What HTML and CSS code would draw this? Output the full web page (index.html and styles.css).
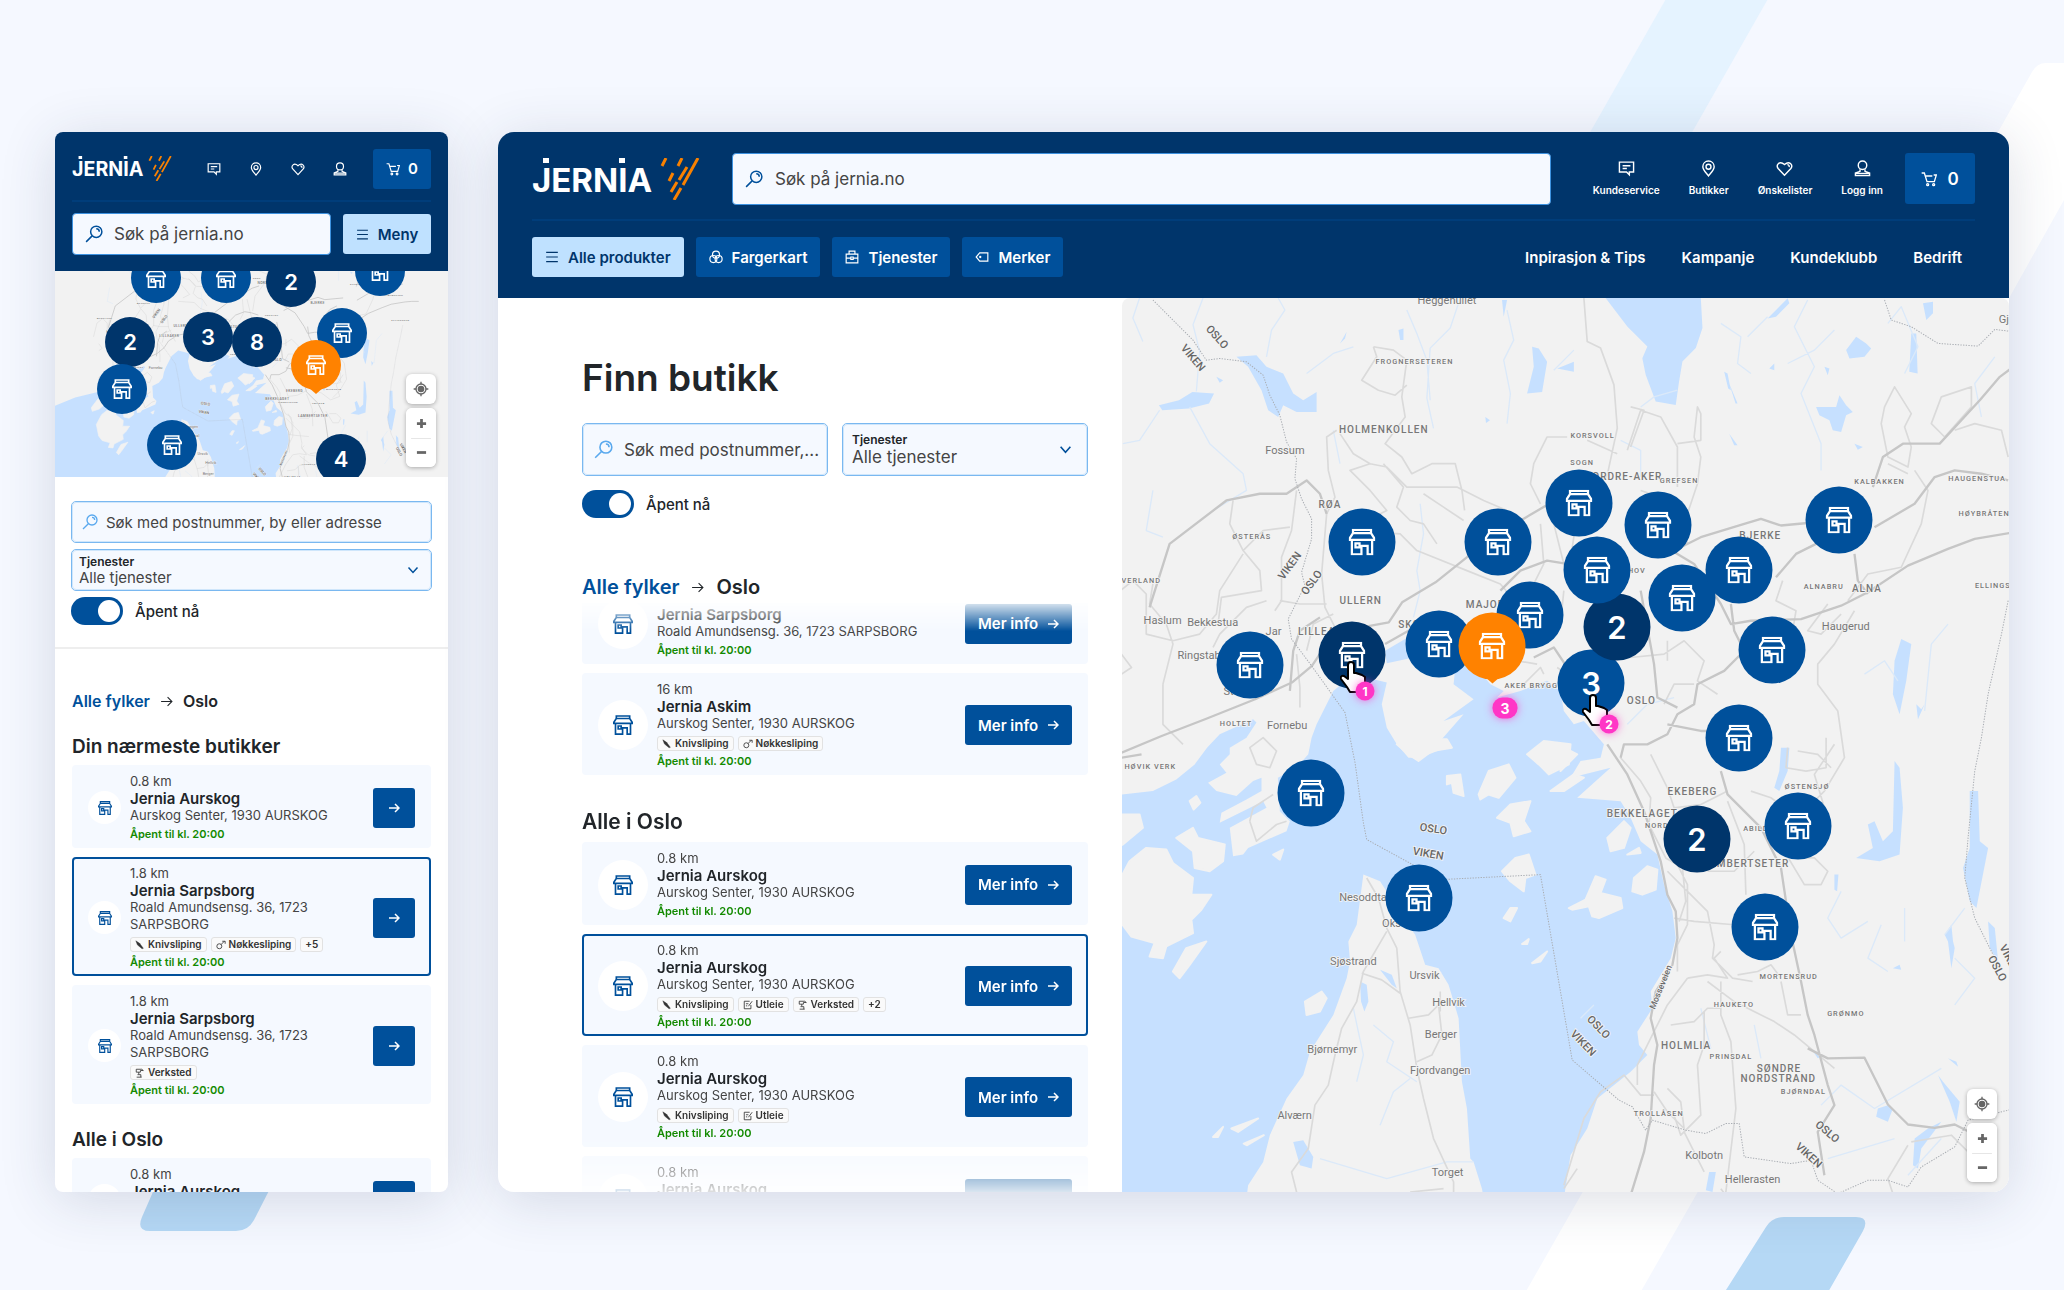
FILE: index.html
```html
<!DOCTYPE html>
<html lang="no">
<head>
<meta charset="utf-8">
<meta name="viewport" content="width=device-width, initial-scale=1">
<title>Finn butikk – Jernia</title>
<link rel="stylesheet" href="styles.css">
</head>
<body>

<svg class="sprite" aria-hidden="true">
  <symbol id="i-store" viewBox="0 0 24 24"><path d="M4 1.2h16v3l3 4.6v1.2H1V8.800l3-4.600zM4 4.200h16M3 10v13h8.500v-7.500H17V23h4V10M6.200 13.200h3.600v3.600H6.200z"/></symbol>
  <symbol id="i-chat" viewBox="0 0 24 24"><path d="M2 3h20v14h-6v4l-4-4H2zM6.500 8h11M6.500 12h6"/></symbol>
  <symbol id="i-place" viewBox="0 0 24 24"><path d="M12 1.500c4.500 0 8 3.300 8 8 0 5-5.500 9.500-8 13-2.500-3.500-8-8-8-13 0-4.700 3.500-8 8-8z"/><circle cx="12" cy="9.500" r="3.500"/></symbol>
  <symbol id="i-heart" viewBox="0 0 24 24"><path d="M12 21.500 3 12C-.5 7 5 0 12 6.500 19 0 24.500 7 21 12zM16 6.500c2 0 3 1.500 2.500 3.500"/></symbol>
  <symbol id="i-user" viewBox="0 0 24 24"><circle cx="12" cy="7.500" r="6"/><path d="M8.500 13v3L2 18.500V22h20v-3.500L15.500 16v-3M2 19h20"/></symbol>
  <symbol id="i-cart" viewBox="0 0 24 24"><path d="M1 3h4l4 13h11l3-10h-4M6.500 7.500H17"/><circle cx="10" cy="20.500" r="1.500"/><circle cx="19" cy="20.500" r="1.500"/></symbol>
  <symbol id="i-search" viewBox="0 0 24 24"><circle cx="15" cy="9" r="7.500"/><path d="m9.500 14.500-8 8M15 5c2.500 0 4 1.500 4 4"/></symbol>
  <symbol id="i-menu" viewBox="0 0 24 24"><path d="M2 4h20M2 12h20M2 20h20"/></symbol>
  <symbol id="i-arrow" viewBox="0 0 24 24"><path d="M2 12h20M14 4l8 8-8 8"/></symbol>
  <symbol id="i-chevron" viewBox="0 0 24 24"><path d="m3 7 9 10 9-10"/></symbol>
  <symbol id="i-plus" viewBox="0 0 24 24"><path d="M12 2v20M2 12h20"/></symbol>
  <symbol id="i-minus" viewBox="0 0 24 24"><path d="M2 12h20"/></symbol>
  <symbol id="i-colors" viewBox="0 0 24 24"><circle cx="12" cy="8" r="6"/><circle cx="7.500" cy="15.500" r="6"/><circle cx="16.500" cy="15.500" r="6"/></symbol>
  <symbol id="i-case" viewBox="0 0 24 24"><path d="M2 7h20v15H2zM7 7V2h10v5M2 14h7M15 14h7M10 12h4v4h-4z"/></symbol>
  <symbol id="i-tag" viewBox="0 0 24 24"><path d="M8 5h14v14H8l-6-7z"/><circle cx="9" cy="12" r="1"/></symbol>
  <symbol id="i-knife" viewBox="0 0 24 24"><path fill="currentColor" stroke-width="1" d="m2 2 9 6 9 12-3 1L6 12z"/></symbol>
  <symbol id="i-key" viewBox="0 0 24 24"><circle cx="8" cy="15" r="6"/><path d="M12 11l8-8M15 3h7v6"/></symbol>
  <symbol id="i-edit" viewBox="0 0 24 24"><path d="M16 3H3v18h16V12M22 3l-9 12M7 9h6M7 14h3"/></symbol>
  <symbol id="i-work" viewBox="0 0 24 24"><path d="M3 3h13l4 3h-7v4H3zM9 10v5M4 22h12M6 16h8v6"/></symbol>
  <symbol id="i-hand" viewBox="0 0 27 32"><path fill="#fff" stroke="#000" stroke-width="2" stroke-linejoin="round" d="M11 1c2 0 3 1 3 3v8l2 0 3 1 3 1 3 2v7l-3 5v3H10l-3-5-6-8c-1-2 1-4 3-3l4 3V4c0-2 1-3 3-3z"/></symbol>
  <symbol id="i-locate" viewBox="0 0 24 24"><circle cx="12" cy="12" r="7.500"/><circle cx="12" cy="12" r="4" fill="currentColor"/><path d="M12 1v4M12 19v4M1 12h4M19 12h4"/></symbol>
  <symbol id="i-logo" viewBox="0 0 168 42">
    <text x="0" y="34" class="logo-word">JERNIA</text>
    <path fill="#fff" stroke="none" d="M11 0h6v5h-6zM87 0h6v5h-6z"/>
    <path fill="none" stroke="#f98100" stroke-width="3" d="M134 0l-4 8M150 0l-4 8M166 0l-15 27M155 9l-8 13M141 15l-4 8M145 24l-6 10M149 30l-7 12"/>
  </symbol>
</svg>

<div class="backdrop" aria-hidden="true">
  <svg width="2064" height="1290" viewBox="0 0 2064 1290">
    <path fill="#e5f3ff" d="M1671-10h102l-91 160h-102z"/>
    <path fill="#fff" d="M2064 63h-18q-9 0-14 9l-112 198v80h60l84-150z"/>
    <path fill="#b5d8f5" d="M180 1130h120l-46 90q-6 11-18 11H150q-14 0-8-14z"/>
    <path fill="#fff" d="M1601 1160h115l-80 140h-115z"/>
    <path fill="#b5d8f5" d="M1784 1217h72q14 0 7 14l-40 70h-104l47-74q6-10 18-10z"/>
  </svg>
</div>

<main class="scene">

<!-- Phone layout -->
<section class="device phone" aria-label="Mobil">
  <header class="site-header">
    <div class="top">
      <svg class="logo"><use href="#i-logo"/></svg>
      <nav class="quick" aria-label="Snarveier">
        <a href="#" aria-label="Kundeservice"><svg class="icon"><use href="#i-chat"/></svg></a>
        <a href="#" aria-label="Butikker"><svg class="icon"><use href="#i-place"/></svg></a>
        <a href="#" aria-label="Ønskelister"><svg class="icon"><use href="#i-heart"/></svg></a>
        <a href="#" aria-label="Logg inn"><svg class="icon"><use href="#i-user"/></svg></a>
      </nav>
      <button class="cart" type="button"><svg class="icon"><use href="#i-cart"/></svg>0</button>
    </div>
    <div class="bottom">
      <label class="search"><svg class="icon"><use href="#i-search"/></svg><input type="text" aria-label="Søk" placeholder="Søk på jernia.no"></label>
      <button class="nav-btn light" type="button"><svg class="icon"><use href="#i-menu"/></svg>Meny</button>
    </div>
  </header>

  <div class="map">
    <svg class="geo" viewBox="45 453 1179 617" preserveAspectRatio="xMidYMin slice"><g transform="translate(175 297) scale(.343)"><use href="#geo"/></g></svg>
    <button class="pin" type="button" aria-label="Butikk" style="left:101px;top:7px"><svg class="icon"><use href="#i-store"/></svg></button>
    <button class="pin" type="button" aria-label="Butikk" style="left:171px;top:7px"><svg class="icon"><use href="#i-store"/></svg></button>
    <button class="pin dark" type="button" style="left:236px;top:11px">2</button>
    <button class="pin" type="button" aria-label="Butikk" style="left:325px;top:0px"><svg class="icon"><use href="#i-store"/></svg></button>
    <button class="pin dark" type="button" style="left:75px;top:71px">2</button>
    <button class="pin dark" type="button" style="left:153px;top:66px">3</button>
    <button class="pin dark" type="button" style="left:202px;top:71px">8</button>
    <button class="pin" type="button" aria-label="Butikk" style="left:287px;top:62px"><svg class="icon"><use href="#i-store"/></svg></button>
    <button class="pin active" type="button" aria-label="Valgt butikk" style="left:261px;top:94px"><svg class="icon"><use href="#i-store"/></svg></button>
    <button class="pin" type="button" aria-label="Butikk" style="left:67px;top:118px"><svg class="icon"><use href="#i-store"/></svg></button>
    <button class="pin" type="button" aria-label="Butikk" style="left:117px;top:174px"><svg class="icon"><use href="#i-store"/></svg></button>
    <button class="pin dark" type="button" style="left:286px;top:188px">4</button>
    <div class="controls">
      <button type="button" aria-label="Min posisjon"><svg class="icon"><use href="#i-locate"/></svg></button>
      <div class="zoom"><button type="button" aria-label="Zoom inn"><svg class="icon"><use href="#i-plus"/></svg></button><button type="button" aria-label="Zoom ut"><svg class="icon"><use href="#i-minus"/></svg></button></div>
    </div>
  </div>

  <form class="filters">
    <label class="field"><svg class="icon"><use href="#i-search"/></svg><input type="text" aria-label="Søk etter butikk" placeholder="Søk med postnummer, by eller adresse"></label>
    <div class="field choice">
      <div><label for="svc-m">Tjenester</label><select id="svc-m"><option>Alle tjenester</option></select></div>
      <svg class="icon"><use href="#i-chevron"/></svg>
    </div>
    <label class="toggle"><input type="checkbox" checked>Åpent nå</label>
  </form>

  <div class="results">
    <nav class="crumbs" aria-label="Fylke"><a href="#">Alle fylker</a><svg class="icon"><use href="#i-arrow"/></svg><span>Oslo</span></nav>
    <h2>Din nærmeste butikker</h2>
    <ul class="stores">
      <li class="store"><span class="badge"><svg class="icon"><use href="#i-store"/></svg></span>
        <div class="info"><p>0.8 km</p><h3>Jernia Aurskog</h3><p>Aurskog Senter, 1930 AURSKOG</p><p class="open">Åpent til kl. 20:00</p></div>
        <button class="more" type="button" aria-label="Mer info"><svg class="icon"><use href="#i-arrow"/></svg></button></li>
      <li class="store selected"><span class="badge"><svg class="icon"><use href="#i-store"/></svg></span>
        <div class="info"><p>1.8 km</p><h3>Jernia Sarpsborg</h3><p>Roald Amundsensg. 36, 1723 SARPSBORG</p>
          <div class="tags"><span><svg class="icon"><use href="#i-knife"/></svg>Knivsliping</span><span><svg class="icon"><use href="#i-key"/></svg>Nøkkesliping</span><span>+5</span></div>
          <p class="open">Åpent til kl. 20:00</p></div>
        <button class="more" type="button" aria-label="Mer info"><svg class="icon"><use href="#i-arrow"/></svg></button></li>
      <li class="store"><span class="badge"><svg class="icon"><use href="#i-store"/></svg></span>
        <div class="info"><p>1.8 km</p><h3>Jernia Sarpsborg</h3><p>Roald Amundsensg. 36, 1723 SARPSBORG</p>
          <div class="tags"><span><svg class="icon"><use href="#i-work"/></svg>Verksted</span></div>
          <p class="open">Åpent til kl. 20:00</p></div>
        <button class="more" type="button" aria-label="Mer info"><svg class="icon"><use href="#i-arrow"/></svg></button></li>
    </ul>
    <h2>Alle i Oslo</h2>
    <ul class="stores">
      <li class="store"><span class="badge"><svg class="icon"><use href="#i-store"/></svg></span>
        <div class="info"><p>0.8 km</p><h3>Jernia Aurskog</h3><p>Aurskog Senter, 1930 AURSKOG</p><p class="open">Åpent til kl. 20:00</p></div>
        <button class="more" type="button" aria-label="Mer info"><svg class="icon"><use href="#i-arrow"/></svg></button></li>
    </ul>
  </div>
</section>

<!-- Desktop layout -->
<section class="device desktop" aria-label="Desktop">
  <header class="site-header">
    <div class="top">
      <svg class="logo"><use href="#i-logo"/></svg>
      <label class="search"><svg class="icon"><use href="#i-search"/></svg><input type="text" aria-label="Søk" placeholder="Søk på jernia.no"></label>
      <nav class="quick" aria-label="Snarveier">
        <a href="#"><svg class="icon"><use href="#i-chat"/></svg>Kundeservice</a>
        <a href="#"><svg class="icon"><use href="#i-place"/></svg>Butikker</a>
        <a href="#"><svg class="icon"><use href="#i-heart"/></svg>Ønskelister</a>
        <a href="#"><svg class="icon"><use href="#i-user"/></svg>Logg inn</a>
      </nav>
      <button class="cart" type="button"><svg class="icon"><use href="#i-cart"/></svg>0</button>
    </div>
    <div class="bottom">
      <button class="nav-btn light" type="button"><svg class="icon"><use href="#i-menu"/></svg>Alle produkter</button>
      <button class="nav-btn" type="button"><svg class="icon"><use href="#i-colors"/></svg>Fargerkart</button>
      <button class="nav-btn" type="button"><svg class="icon"><use href="#i-case"/></svg>Tjenester</button>
      <button class="nav-btn" type="button"><svg class="icon"><use href="#i-tag"/></svg>Merker</button>
      <nav class="links" aria-label="Sider"><a href="#">Inpirasjon &amp; Tips</a><a href="#">Kampanje</a><a href="#">Kundeklubb</a><a href="#">Bedrift</a></nav>
    </div>
  </header>

  <div class="body">
    <div class="panel">
      <h1>Finn butikk</h1>
      <form class="filters">
        <label class="field"><svg class="icon"><use href="#i-search"/></svg><input type="text" aria-label="Søk etter butikk" placeholder="Søk med postnummer,..."></label>
        <div class="field choice">
          <div><label for="svc-d">Tjenester</label><select id="svc-d"><option>Alle tjenester</option></select></div>
          <svg class="icon"><use href="#i-chevron"/></svg>
        </div>
        <label class="toggle"><input type="checkbox" checked>Åpent nå</label>
      </form>
      <nav class="crumbs" aria-label="Fylke"><a href="#">Alle fylker</a><svg class="icon"><use href="#i-arrow"/></svg><span>Oslo</span></nav>
      <div class="results">
        <ul class="stores">
          <li class="store"><span class="badge"><svg class="icon"><use href="#i-store"/></svg></span>
            <div class="info"><p>1.8 km</p><h3>Jernia Sarpsborg</h3><p>Roald Amundsensg. 36, 1723 SARPSBORG</p><p class="open">Åpent til kl. 20:00</p></div>
            <button class="more" type="button">Mer info<svg class="icon"><use href="#i-arrow"/></svg></button></li>
          <li class="store"><span class="badge"><svg class="icon"><use href="#i-store"/></svg></span>
            <div class="info"><p>16 km</p><h3>Jernia Askim</h3><p>Aurskog Senter, 1930 AURSKOG</p>
              <div class="tags"><span><svg class="icon"><use href="#i-knife"/></svg>Knivsliping</span><span><svg class="icon"><use href="#i-key"/></svg>Nøkkesliping</span></div>
              <p class="open">Åpent til kl. 20:00</p></div>
            <button class="more" type="button">Mer info<svg class="icon"><use href="#i-arrow"/></svg></button></li>
        </ul>
        <h2>Alle i Oslo</h2>
        <ul class="stores">
          <li class="store"><span class="badge"><svg class="icon"><use href="#i-store"/></svg></span>
            <div class="info"><p>0.8 km</p><h3>Jernia Aurskog</h3><p>Aurskog Senter, 1930 AURSKOG</p><p class="open">Åpent til kl. 20:00</p></div>
            <button class="more" type="button">Mer info<svg class="icon"><use href="#i-arrow"/></svg></button></li>
          <li class="store selected"><span class="badge"><svg class="icon"><use href="#i-store"/></svg></span>
            <div class="info"><p>0.8 km</p><h3>Jernia Aurskog</h3><p>Aurskog Senter, 1930 AURSKOG</p>
              <div class="tags"><span><svg class="icon"><use href="#i-knife"/></svg>Knivsliping</span><span><svg class="icon"><use href="#i-edit"/></svg>Utleie</span><span><svg class="icon"><use href="#i-work"/></svg>Verksted</span><span>+2</span></div>
              <p class="open">Åpent til kl. 20:00</p></div>
            <button class="more" type="button">Mer info<svg class="icon"><use href="#i-arrow"/></svg></button></li>
          <li class="store"><span class="badge"><svg class="icon"><use href="#i-store"/></svg></span>
            <div class="info"><p>0.8 km</p><h3>Jernia Aurskog</h3><p>Aurskog Senter, 1930 AURSKOG</p>
              <div class="tags"><span><svg class="icon"><use href="#i-knife"/></svg>Knivsliping</span><span><svg class="icon"><use href="#i-edit"/></svg>Utleie</span></div>
              <p class="open">Åpent til kl. 20:00</p></div>
            <button class="more" type="button">Mer info<svg class="icon"><use href="#i-arrow"/></svg></button></li>
          <li class="store"><span class="badge"><svg class="icon"><use href="#i-store"/></svg></span>
            <div class="info"><p>0.8 km</p><h3>Jernia Aurskog</h3><p>Aurskog Senter, 1930 AURSKOG</p><p class="open">Åpent til kl. 20:00</p></div>
            <button class="more" type="button">Mer info<svg class="icon"><use href="#i-arrow"/></svg></button></li>
        </ul>
      </div>
    </div>

    <div class="map">
      <svg class="geo" viewBox="6 24 2658 2676" preserveAspectRatio="xMidYMin slice">
        <g id="geo">
          <!-- fjord -->
          <path class="water" d="M-400 1640 L-200 1560 L6 1510 100 1500 170 1465 225 1420 262 1370 300 1330 400 1285 410 1295 380 1340 330 1370 330 1390 300 1420 320 1445 265 1475 290 1500 350 1515 400 1470 425 1460 425 1500 380 1525 305 1565 300 1595 430 1530 440 1550 330 1610 340 1695 370 1690 385 1670 500 1620 510 1590 480 1560 474 1460 530 1430 565 1390 575 1340 590 1300 620 1240 640 1200 700 1150 800 1175 785 1240 800 1310 830 1360 865 1400 900 1400 990 1365 960 1350 1030 1270 970 1290 1060 1225 1000 1180 1005 1130 1060 1120 1110 1180 1150 1200 1130 1220 1200 1200 1280 1170 1320 1200 1330 1260 1360 1300 1390 1290 1450 1360 1440 1400 1380 1410 1350 1460 1470 1430 1370 1520 1500 1530 1530 1580 1560 1650 1610 1690 1630 1780 1655 1860 1665 1940 1650 2000 1590 2100 1595 2150 1550 2220 1555 2260 1580 2290 1530 2340 1430 2420 1400 2510 1350 2590 1330 2720 1090 2720 1085 2690 1060 2610 1050 2600 1040 2450 1025 2370 1015 2180 985 2080 955 2030 915 2020 885 1930 850 1880 780 1770 730 1750 710 1900 685 1950 690 2010 680 2060 640 2170 570 2280 550 2350 500 2420 450 2530 430 2610 385 2680 380 2720 -400 2720z"/>
          <path class="water" d="M795 1080l65-38 10 60-70 15z"/>
          <!-- islands -->
          <path class="land" d="M30 1710l50-40 60 5 20 40 60 45-5 50 60 0-30 45-30 30 5 40-80 40-10 35-40-5 15-40-70-20-30-40-20-100z"/>
          <path class="land" d="M170 1640l50-30 15 30 80 20-5 50-40 30-45-10-5-50zM-60 1650l60-80 60 0 10 40-60 50-60 20zM210 1530l20-15 12 20-20 20zM160 2040l40-70 60-20-50 70-30 40zM555 2130l50-30 15 20-20 40-40 10zM280 2535l30-30-15 30zM335 2510l80-30-60 40zM372 2555l60-25-50 30zM460 1690l30-15-10 30z"/>
          <path class="land" d="M830 1360l60-15 90 0 15 25-60 10-40 30-30-20zM980 1455l40-5 10 65-30-10-5-30-15 5zM1075 1510l30-70 60-20 20 40-50 60-30-10-25 15zM1220 1390l50-40 80 10-5 60-60 30-30-30zM1290 1500l70-50 30 10-60 40zM1130 1580l40-40 60-10-20 60 20 30-50 15-10-40zM1145 1740l40-40 40-10 20 60-30 10-5 40-40-30zM1150 1880l20-30 20 0-20 40zM1205 1958l20-15-5 15zM1235 2015l45-35-20 30z"/>
          <path class="land" d="M1320 1410l30-30 20 10-50 50zM1460 1640l50-50 20 20-20 60-40 10zM1540 1760l40-35 30 10-5 60-40 15-30-10zM1345 1850l50-25 30-70 30 10-15 40 60 15 5 30-70 30-20-5-10-30-50 10zM1520 1690l35-20 5 15z"/>
          <!-- lakes -->
          <path class="water" d="M350 200l60-5 30 35 50 20 30 60 30 20 40-25v60l-60 0-40-20-15 35-30-20-20-60-40-70zM118 345l60-15 40-25 65 5-15 30-60 15-80 5zM1235 170l20 5 25 40-15 90-45 5 20-80zM1310 235l50-20 0 30zM660 160l20-35-5 20zM835 120l15-5 0 35-10 0zM290 260l20 10-10 8zM1145 30l15 0-10 50zM520 2550l30-5 30 50-5 35-35-10zM720 2070l20 10 5 50-12 30-10-30zM780 2035l35 15 15 40-15-10zM1095 380l14 10-12 8z"/>
          <path class="water" d="M1455 24h285l5 90-20 60-40 40-10 60-10 70-60-10-30-80-10-50 15-35-60-60zM2175 180l30-40 30 20 15 15-20 25-45 5zM2370 130l15 0 4 120-25-5zM2085 350l60 0 10-35 20 30 20 20-20 10-15 50-25-5-10-30-30-15zM1940 85l60-60 5 15-40 40zM1820 250l10 50-8-5-12-50zM1825 280l25 60-6 0zM2405 40l30-5 0 35-20 20zM1825 430l25 35-10 0zM2200 460l25 10-15 8zM1945 235l15-15 0 20zM2110 230l15 5-5 20zM2340 1045l30 15-15 110-20 100-20-60 5-100zM2385 1240l15 15 10-15-20 45z"/>
          <path class="water" d="M1980 1370l25 0-5 70-25 60-15-10 15-50zM2320 1410l15 20 10 120-10 140-60 20-70-10 50-30-15-70 20-10 25 60 30-30zM2545 1500l25 0 5 150 25 20-35 180-20-20-20-100 20-60zM2600 1890l20 20 10 100-25-40zM2470 1930l20-30 5 50 5 20-10 60-10-80zM2270 2450l30-10 15 10-15 40-35-15zM2450 2350l15 20 50 60-10 60-20-60zM2380 2540l40-30 40-20-60 80-10 60-15-10zM2140 1750l12 0-4 50-8-5zM2315 2030l20-10 5 15zM1765 2640l20 0-10 60-20-5zM2070 2270l30 25-10 5zM2480 2300l25 10 5 15z"/>
          <!-- streams -->
          <path class="stream" d="M60 24l-20 60 30 70M250 24l-30 80 20 80-10 120M440 200l15-80 40-60-20-36M100 600l-20 120 50 20M120 360l-60 90-50 10M210 350l60 110 100 90 10 50-100 60M560 250l80-60 60-20M860 60l30 70 30 80 10 120M1020 24l-30 90-60 60-10 150 20 90M1160 60l20 90-30 60 20 100-10 90M640 420l20 100M760 2200l60 50-20 60 90 60M600 2600l200 60 180-50 80 0M780 2500l40-100 50-40M700 2150l30 140-20 80M1300 240l60-60M900 640l10 90-20 110 10 60-20 80M1500 450l60 30 0 80M1560 350l40-30 70-20M1420 2140l-40 40M1800 100l60 40-10 80 40 30M1880 140l60-60M2000 220l80-40 60-60M2060 30l-40 80 60 120-40 80 60 150 0 80M2300 100l40-50 50 120-40 80M2230 1150l60-40 40 60M2480 1000l-50 60-20 200M2280 1900l-40 100 60 40M2500 2000l60 60-60 80M2470 1930l60-80M2350 1850l0 100M2160 1800l-40 80 40 60 80-50M1740 2150l30 120M1900 2200l20 100M1520 1300l60-60 80-20M2100 2440l60-60 100 70 200-120M2120 2600l200-60M2360 2650l100-110M2620 200l-60 80 20 100"/>
          <!-- minor roads -->
          <path class="road" d="M760 170l60 10 40 30-15 110 10 60-60 80 50 40 30 50 60-30 70 0 20 80 8 60M760 170l10 30-45 70 50 30 50 15 35-30M650 420l-30 20 5 100 20 80-25 50-15 180 10 100 60 120M660 430l40 60 50 30 50 10 60 60 60 0 90 0 80 40 70 30M750 520l-60 20 60 60 50 60-60 30M790 520l60 70-20 60 40 40 40 10 40 60M910 610l60 40 60 40M700 720l140 10 50 50 150 60 100 40 60 70M340 630l-10 70 40 80 50 60 5 60-120 20-10 80M370 790l-70 110-10 70-50 60-80 20-80-20 0-120 -40-40-50 40-30 120M100 880l-10 60 50 60 20 60-30 120M440 930l-60 20-80 80-20 40M480 930l60 10 80 0M530 600l-15 120-30 80 0 130-20 30M370 780l60-60 80-10M6 1090l30 40-30 20M130 1180l0 120 60 60M300 1160l60 30 80-20M530 1090l10 100 0 60M560 1080l20-80 60-30M1390 24l10 130 40 20 40 110 10 130-30 140-90 120-20 130M1340 440l-60 0-40 80-10 60 30 60M1520 480l40-120 60 20 50 90 0 120M1670 460l70-10 0-80-10-20-10 90 20 60-10 80-40 120 10 60M1530 350l40 10-40 110M1400 450l90 40M1260 700l10 120-30 60M1300 700l40 160M1560 600l60 20 20 70M1985 870l-20 60 60 30-10 60M2120 940l-60 80 40 10 60-60M2200 960l-60 100-50 60 0 60 60 80 20 140-60 100-60 60M2290 350l30-60 50 80-20 40 20 60-10 60-60-30-20-100zM2430 400l30-80 90-30 0 60-80 90zM2500 420l60-20 80 20 20 80M2380 540l40 60-20 100-60 130-100 20-60 80M2360 550l-60-30M1530 1100l100-10 60-40 60 60-20 60 60 40M1630 1240l30-60 60 0M1640 1050l0 60M1330 900l-10 100M1500 1400l60 70 30 50-5 80 50 100 50 30 10 100-20 60M1590 1390l50 100 20 60 80-10 80-40M1640 1740l60 60 60 60 20 100-5 40 60 60 60 10M1660 1880l60 10 120 10M1660 1700l40 80 0 120-30 60 0 80M1700 2060l-60 80-30 60-60 120 0 60M1700 2060l60-10 60 10-40-60 20-20M1760 2070l80 60 120 60 60 40 120 100M1800 2070l0 100 30 80 15 200-30 250M1650 2200l70-10 40-40 40 0M1750 2160l0 100-20 60 10 150-60 60-20-60M1850 2050l60-10 40-20 30 40M1980 2070l20 100 40 0M1890 1500l60 20 80 60 80-30-30-100 60-90M2030 1380l60 10 40 40M1990 1680l60 100 50 0 20-40-40-40-60 0M1820 1530l50 130 5 150M1900 1680l-60 60-80 0M2000 1370l-5 60 60 10 60-10 0-90M390 1590l10-40 60-40M390 1590l20 60 60-50 30-10M390 1370l40-30 40 40-20 50-40-10z"/>
          <path class="road" d="M740 1760l35 60 25 90 30 60 10 130 30 100 20 130 20 90 30 120 60 130 0 60M800 1920l-70 120-20 90-45 80-20 80-20 90-40 60-20 130-50 70 20 80-10 60-50 40M725 2045l60 20 55 40M865 2180l60-10 30-30 10 90-30 60-45 20M870 2700l100-10M960 2100l0 60M1330 2690l40-60M1330 2680l60-200 50-80 70-50 50 60 40 0M1600 2400l40 60 50 50-10-80-40-40M1690 2520l30 60 30 60M1800 2690l30 40M2370 2550l60-10 60-10 60 60 20 60M2360 2560l-60 100 20 60M1310 1130l60 40M1210 1180l50-50 10 20M1130 1100l120 20"/>
          <!-- main roads -->
          <path class="road main" d="M6 1385l120-50 130-50 150-60 110-50 60-50 40-60 80-50 110-20 40-60 100-60 100-80 80-60 100-60 120-70 60-20M6 1400l60-10M600 980l-60 40-20 60-10 120M795 1060l70-40 40-20M90 950l60-190 170-130 100-20 80 0 60-40 40 40 20 60M1140 900l60-60 80-30 60 10 60 20M1240 1100l60-30 40 60 0 40M1620 800l120-60 130-40 50-15 60 20 160-15M1620 760l100 60 80 120 30 60 60-10 150-5 120-40 80-40 120-80 120-50 80-30 120-20 60-5 60 0M1830 940l10 80 30 60-60 60-80 40-10 60-50 30-30 60-60 30-70 0-10 40M1560 900l40 220 10 100 60 30M1640 1300l100 20 60 0M1965 860l60-70 60-30M2200 790l10 80 30 40M2255 590l30-90 60-40 110 0 120-130 60-70 40-30M2260 710l120-70 60-80 60-20 80 10 80 20M1460 1360l60 90 50 110 50 150 20 100 25 50 5 80-15 80-50 80-15 80 20 80-10 60-10 160-20 100-40 130-40 60-20 60M1800 1440l20 70 100 100 60 120 30 200 30 140 20 100 20 60 40 150 20 60-50 80 20 130M2060 2270l60 30 110-2 30 60 40 80 60 60 80 10 60-10 40 20"/>
          <!-- county border -->
          <path class="border" d="M100 30l60 60 60 60 40 60 40-5 80 10 50 40 20 60 30 60 20 80 30 50-5 60 20 60 30 60 0 60-30 100 10 40-50 100 10 60 60 80 100 140 30 150 25 180 10 50 220 120 300-15 95 555 140 120 40 20 40 70 20-30 100 30 60 10 60-30 40 0 15 100 140 20 60-10 20 60 60 40 90-40 60 0 60 20 40-60 100-60 40-80 120-30 40-5M2290 30l20 60 60 20 80 50 120 8 50-50 40 5M2660 930l-20 100-40 180-20 130-20 100-20 200-10 120 30 120 60 120 20 30"/>
          <g class="names">
            <text x="980" y="42" font-size="33">Heggehullet</text><text x="495" y="491" font-size="33">Fossum</text>
            <text x="129" y="1000" font-size="33">Haslum</text><text x="279" y="1007" font-size="33">Bekkestua</text><text x="461" y="1032" font-size="33">Jar</text>
            <text x="264" y="1106" font-size="33">Ringstabekk</text><text x="370" y="1212" font-size="33">Stabekk</text><text x="502" y="1314" font-size="33">Fornebu</text>
            <text x="2660" y="98" font-size="33">Gjel</text><text x="2174" y="1018" font-size="33">Haugerud</text>
            <text x="765" y="1829" font-size="33">Nesoddtangen</text><text x="835" y="1908" font-size="33">Oksval</text><text x="700" y="2021" font-size="33">Sjøstrand</text>
            <text x="913" y="2063" font-size="33">Ursvik</text><text x="985" y="2143" font-size="33">Hellvik</text><text x="962" y="2238" font-size="33">Berger</text>
            <text x="637" y="2285" font-size="33">Bjørnemyr</text><text x="960" y="2347" font-size="33">Fjordvangen</text><text x="524" y="2481" font-size="33">Alværn</text>
            <text x="982" y="2653" font-size="33">Torget</text><text x="1750" y="2601" font-size="33">Kolbotn</text><text x="1895" y="2673" font-size="33">Hellerasten</text>
          </g>
          <g class="names county">
            <text transform="translate(284 148) rotate(48)">OSLO</text><text transform="translate(212 210) rotate(50)">VIKEN</text>
            <text transform="translate(518 832) rotate(-54)">VIKEN</text><text transform="translate(584 882) rotate(-54)">OSLO</text>
            <text transform="translate(938 1624) rotate(8)">OSLO</text><text transform="translate(922 1698) rotate(10)">VIKEN</text>
            <text transform="translate(1426 2214) rotate(46)">OSLO</text><text transform="translate(1380 2262) rotate(46)">VIKEN</text>
            <text transform="translate(2112 2528) rotate(40)">OSLO</text><text transform="translate(2056 2598) rotate(42)">VIKEN</text>
            <text transform="translate(2618 2036) rotate(62)">OSLO</text><text transform="translate(2655 2008) rotate(62)">VIKEN</text>
            <text transform="translate(1628 2090) rotate(-68)" font-size="26">Mosseveien</text>
          </g>
          <g class="names caps">
            <text x="791" y="429">HOLMENKOLLEN</text><text x="630" y="653">RØA</text><text x="722" y="940">ULLERN</text><text x="622" y="1032">LILLEAKER</text>
            <text x="1150" y="951">MAJORSTUEN</text><text x="900" y="1012">SKØYEN</text><text x="1508" y="568">NORDRE-AKER</text><text x="1918" y="746">BJERKE</text>
            <text x="2237" y="903">ALNA</text><text x="1562" y="1240">OSLO</text><text x="1715" y="1512">EKEBERG</text><text x="1565" y="1578">BEKKELAGET</text>
            <text x="1875" y="1726">LAMBERTSETER</text><text x="1696" y="2271">HOLMLIA</text><text x="1974" y="2341">SØNDRE</text><text x="1972" y="2370">NORDSTRAND</text>
          </g>
          <g class="names small">
            <text x="883" y="222">FROGNERSETEREN</text><text x="396" y="745">ØSTERÅS</text><text x="56" y="877">ØVERLAND</text><text x="349" y="1304">HOLTET</text>
            <text x="1416" y="443">KORSVOLL</text><text x="1385" y="525">SOGN</text><text x="1675" y="577">GREFSEN</text><text x="1240" y="1192">AKER BRYGGE</text>
            <text x="2275" y="580">KALBAKKEN</text><text x="2567" y="573">HAUGENSTUA</text><text x="2588" y="677">HØYBRÅTEN</text><text x="2108" y="894">ALNABRU</text>
            <text x="2640" y="892">ELLINGSRUD</text><text x="92" y="1433">HØVIK VERK</text><text x="2058" y="1493">ØSTENSJØ</text><text x="1660" y="1609">NORDSTRAND</text>
            <text x="1922" y="1618">ABILDSØ</text><text x="2003" y="2063">MORTENSRUD</text><text x="1839" y="2145">HAUKETO</text><text x="2174" y="2173">GRØNMO</text>
            <text x="1830" y="2302">PRINSDAL</text><text x="2047" y="2406">BJØRNDAL</text><text x="1614" y="2473">TROLLÅSEN</text><text x="1515" y="846">TORSHOV</text>
          </g>
        </g>
      </svg>
      <button class="pin" type="button" style="left:469px;top:385px">3</button>
      <button class="pin dark" type="button" style="left:495px;top:329px">2</button>
      <button class="pin" type="button" aria-label="Butikk" style="left:240px;top:244px"><svg class="icon"><use href="#i-store"/></svg></button>
      <button class="pin" type="button" aria-label="Butikk" style="left:376px;top:244px"><svg class="icon"><use href="#i-store"/></svg></button>
      <button class="pin" type="button" aria-label="Butikk" style="left:457px;top:205px"><svg class="icon"><use href="#i-store"/></svg></button>
      <button class="pin" type="button" aria-label="Butikk" style="left:536px;top:227px"><svg class="icon"><use href="#i-store"/></svg></button>
      <button class="pin" type="button" aria-label="Butikk" style="left:475px;top:272px"><svg class="icon"><use href="#i-store"/></svg></button>
      <button class="pin" type="button" aria-label="Butikk" style="left:560px;top:300px"><svg class="icon"><use href="#i-store"/></svg></button>
      <button class="pin" type="button" aria-label="Butikk" style="left:617px;top:272px"><svg class="icon"><use href="#i-store"/></svg></button>
      <button class="pin" type="button" aria-label="Butikk" style="left:717px;top:222px"><svg class="icon"><use href="#i-store"/></svg></button>
      <button class="pin" type="button" aria-label="Butikk" style="left:650px;top:352px"><svg class="icon"><use href="#i-store"/></svg></button>
      <button class="pin" type="button" aria-label="Butikk" style="left:317px;top:346px"><svg class="icon"><use href="#i-store"/></svg></button>
      <button class="pin" type="button" aria-label="Butikk" style="left:408px;top:317px"><svg class="icon"><use href="#i-store"/></svg></button>
      <button class="pin active" type="button" aria-label="Valgt butikk" style="left:370px;top:348px"><svg class="icon"><use href="#i-store"/></svg></button>
      <button class="pin dark" type="button" aria-label="Butikk" style="left:230px;top:357px"><svg class="icon"><use href="#i-store"/></svg></button>
      <button class="pin" type="button" aria-label="Butikk" style="left:128px;top:367px"><svg class="icon"><use href="#i-store"/></svg></button>
      <button class="pin" type="button" aria-label="Butikk" style="left:617px;top:440px"><svg class="icon"><use href="#i-store"/></svg></button>
      <button class="pin" type="button" aria-label="Butikk" style="left:189px;top:495px"><svg class="icon"><use href="#i-store"/></svg></button>
      <button class="pin" type="button" aria-label="Butikk" style="left:297px;top:600px"><svg class="icon"><use href="#i-store"/></svg></button>
      <button class="pin dark" type="button" style="left:575px;top:541px">2</button>
      <button class="pin" type="button" aria-label="Butikk" style="left:676px;top:528px"><svg class="icon"><use href="#i-store"/></svg></button>
      <button class="pin" type="button" aria-label="Butikk" style="left:643px;top:629px"><svg class="icon"><use href="#i-store"/></svg></button>
      <svg class="hand" style="left:218px;top:363px"><use href="#i-hand"/></svg>
      <svg class="hand" style="left:460px;top:396px"><use href="#i-hand"/></svg>
      <span class="note" style="left:243px;top:393px">1</span>
      <span class="note" style="left:487px;top:426px">2</span>
      <span class="note wide" style="left:383px;top:410px">3</span>
      <div class="controls">
        <button type="button" aria-label="Min posisjon"><svg class="icon"><use href="#i-locate"/></svg></button>
        <div class="zoom"><button type="button" aria-label="Zoom inn"><svg class="icon"><use href="#i-plus"/></svg></button><button type="button" aria-label="Zoom ut"><svg class="icon"><use href="#i-minus"/></svg></button></div>
      </div>
    </div>
  </div>
</section>

</main>
</body>
</html>
```
FILE: styles.css
```css
*, *::before, *::after { box-sizing: border-box; }
body {
  margin: 0;
  background: #f5f8ff;
  color: #212529;
  font-family: Inter, "Liberation Sans", sans-serif;
  font-size: 13px;
}
h1, h2, h3, p, ul { margin: 0; padding: 0; }
h1, h2, h3 { font-weight: 600; }
ul { list-style: none; }
a { color: inherit; text-decoration: none; }
button, input, select { font: inherit; color: inherit; }
button { border: 0; padding: 0; cursor: pointer; }

.sprite { position: absolute; width: 0; height: 0; }
.icon {
  display: block;
  flex: none;
  width: 16px;
  height: 16px;
  fill: none;
  stroke: currentColor;
  stroke-width: 2;
}
.logo-word { font-family: Inter, sans-serif; font-weight: 700; font-size: 33px; fill: #fff; stroke: none; }

.backdrop { position: absolute; inset: 0; overflow: hidden; z-index: -1; }
.scene { display: flex; gap: 50px; height: 100vh; padding: 132px 55px 98px; }
.device {
  display: flex;
  flex-direction: column;
  overflow: hidden;
  background: #fff;
  box-shadow: 0 8px 56px rgba(40, 50, 90, .16);
}
.phone { flex: 0 0 393px; border-radius: 8px; }
.desktop { flex: 1; min-width: 0; border-radius: 16px; }

/* Header */
.site-header { flex: none; background: #00356b; color: #fff; }
.top, .bottom { display: flex; align-items: center; }
.top { border-bottom: 2px solid #003d7a; }
.logo { flex: none; }
.quick { display: flex; font-size: 10px; font-weight: 600; line-height: 14px; }
.quick a { display: flex; flex-direction: column; align-items: center; gap: 6px; }
.cart, .nav-btn {
  display: flex;
  align-items: center;
  justify-content: center;
  background: #00509b;
  border-radius: 3px;
  font-weight: 600;
}
.search {
  display: flex;
  align-items: center;
  background: #f5f9ff;
  border: 1px solid #3d92e0;
  border-radius: 4px;
  color: #00509b;
}
input[type="text"] {
  flex: 1;
  min-width: 0;
  border: 0;
  padding: 0;
  outline: 0;
  background: none;
  color: #444;
}
input::placeholder { color: #444; opacity: 1; }
.nav-btn { height: 40px; gap: 9px; font-size: 15px; }
.nav-btn.light { background: #bfe1ff; color: #00356b; }

.phone .site-header { padding: 17px 17px 16px; }
.phone .top { justify-content: space-between; height: 53px; padding-bottom: 12px; }
.phone .logo { width: 100px; height: 25px; }
.phone .quick { gap: 28px; padding-left: 8px; }
.phone .quick .icon { width: 14px; height: 14px; }
.phone .cart { width: 58px; height: 40px; gap: 8px; font-size: 15px; }
.phone .cart .icon { width: 14px; height: 14px; }
.phone .bottom { gap: 12px; padding-top: 11px; }
.phone .search { flex: 1; min-width: 0; height: 42px; padding: 0 12px; gap: 11px; font-size: 17px; }
.phone .search .icon { width: 18px; height: 18px; }
.phone .nav-btn { width: 88px; }
.phone .nav-btn .icon { width: 13px; height: 13px; }

.desktop .site-header { padding: 21px 34px; }
.desktop .top { height: 68px; padding-bottom: 15px; }
.desktop .logo { width: 168px; height: 42px; }
.desktop .search { flex: 1; min-width: 0; height: 52px; margin: 0 42px 0 32px; padding: 0 12px; gap: 12px; font-size: 17px; }
.desktop .search .icon { width: 18px; height: 18px; }
.desktop .quick { gap: 29px; margin-right: 22px; }
.desktop .quick .icon { width: 17px; height: 17px; }
.desktop .cart { width: 70px; height: 51px; gap: 10px; font-size: 17px; }
.desktop .bottom { gap: 12px; padding-top: 16px; }
.desktop .nav-btn { padding: 0 13px; }
.desktop .nav-btn .icon { width: 14px; height: 14px; }
.links { display: flex; gap: 36px; margin-left: auto; padding-right: 13px; font-size: 15px; font-weight: 600; }

/* Map */
.map { position: relative; overflow: hidden; background: #f2f2f2; }
.phone .map { flex: none; height: 206px; }
.geo { position: absolute; inset: 0; width: 100%; height: 100%; }
.water { fill: #c6e0ff; }
.land { fill: #f2f2f2; stroke: #f2f2f2; stroke-width: 6; stroke-linejoin: round; }
.stream, .road, .border { fill: none; stroke-linejoin: round; }
.stream { stroke: #dbe9f9; stroke-width: 4; }
.road { stroke: #dadada; stroke-width: 5; }
.road.main { stroke: #c6c6c6; stroke-width: 7; }
.border { stroke: #a9adb3; stroke-width: 3; stroke-dasharray: 4 4; }
.names {
  font-family: Roboto, sans-serif;
  text-anchor: middle;
  fill: #777;
  stroke: #f4f4f4;
  stroke-width: 5;
  paint-order: stroke;
}
.county { font-size: 33px; fill: #666; font-weight: 500; }
.caps { font-size: 30px; font-weight: 500; letter-spacing: 3px; }
.small { font-size: 22px; font-weight: 500; letter-spacing: 3px; }

.pin {
  position: absolute;
  display: grid;
  place-items: center;
  width: 50px;
  height: 50px;
  transform: translate(-50%, -50%);
  border-radius: 50%;
  background: #00509b;
  color: #fff;
  font-size: 22px;
  font-weight: 600;
}
.pin .icon { width: 20px; height: 20px; }
.pin.dark { background: #00356b; }
.pin.active { background: #ff8200; }
.pin.active::after {
  content: "";
  position: absolute;
  left: 50%;
  top: 100%;
  margin: -3px 0 0 -8px;
  border: 8px solid transparent;
  border-bottom: 0;
  border-top: 7px solid #ff8200;
}
.desktop .pin { width: 67px; height: 67px; font-size: 31px; }
.desktop .pin .icon { width: 27px; height: 27px; }
.hand { position: absolute; width: 27px; height: 32px; }
.note {
  position: absolute;
  width: 19px;
  height: 19px;
  transform: translate(-50%, -50%);
  border-radius: 10px;
  background: #ff36c6;
  box-shadow: 0 0 8px rgba(255, 54, 198, .7);
  color: #fff;
  font-size: 12px;
  font-weight: 700;
  line-height: 19px;
  text-align: center;
}
.note.wide { width: 25px; height: 21px; line-height: 21px; font-size: 14px; }
.controls { position: absolute; right: 12px; bottom: 10px; display: grid; gap: 4px; }
.controls button { display: grid; place-items: center; width: 30px; height: 30px; border-radius: 6px; background: #fff; color: #666; }
.controls > button, .zoom { border-radius: 6px; box-shadow: 0 1px 4px rgba(0, 0, 0, .3); }
.zoom { display: grid; background: #fff; }
.zoom .icon { width: 11px; height: 11px; stroke-width: 6; }
.zoom button + button { height: 29px; background: linear-gradient(#e6e6e6, #e6e6e6) center top / 20px 1px no-repeat #fff; }

/* Filters */
.field {
  display: flex;
  align-items: center;
  border: 1px solid #7ab8f0;
  outline: 1px solid #cfe6fb;
  outline-offset: -2px;
  border-radius: 5px;
  background: #f5f9ff;
  color: #444;
}
.field > .icon { color: #5aa9ee; }
.choice { justify-content: space-between; }
.choice > div { display: flex; flex-direction: column; flex: 1; min-width: 0; }
.choice label { color: #212529; font-size: 12px; font-weight: 600; line-height: 14px; }
.choice select { appearance: none; border: 0; padding: 0; background: none; outline: 0; }
.choice > .icon { width: 12px; height: 12px; color: #00509b; stroke-width: 3; }
.toggle { display: flex; align-items: center; gap: 12px; font-size: 15px; font-weight: 500; }
.toggle input {
  appearance: none;
  display: flex;
  justify-content: flex-end;
  width: 52px;
  height: 28px;
  margin: 0;
  padding: 3px;
  border-radius: 14px;
  background: #00509b;
}
.toggle input::before { content: ""; width: 22px; height: 22px; border-radius: 50%; background: #fff; }

.phone .filters { flex: none; display: grid; gap: 6px; padding: 24px 16px 22px; border-bottom: 2px solid #eee; }
.phone .field { height: 42px; padding: 0 10px; gap: 8px; font-size: 15px; }
.phone .choice { padding: 0 12px 0 7px; }
.phone .choice select { line-height: 17px; }
.desktop .filters { display: grid; grid-template-columns: repeat(2, minmax(0, 1fr)); gap: 14px; }
.desktop .field { height: 53px; padding: 0 4px 0 11px; gap: 11px; font-size: 17px; }
.desktop .field > .icon { width: 19px; height: 19px; }
.desktop .choice { padding: 0 15px 0 9px; }
.desktop .choice > .icon { width: 13px; height: 13px; }
.desktop .choice select { line-height: 20px; }

/* Store list */
.crumbs { display: flex; align-items: center; font-weight: 600; }
.crumbs a { color: #00509b; }
.crumbs .icon { width: 13px; height: 13px; }
.stores { display: grid; gap: 9px; }
.store { display: flex; align-items: center; gap: 9px; padding: 8px 16px 6px; border-radius: 4px; background: #f5f9ff; }
.store.selected { box-shadow: inset 0 0 0 2px #00509b; }
.badge { flex: none; display: grid; place-items: center; border-radius: 50%; background: #fff; color: #00509b; }
.info { flex: 1; min-width: 0; line-height: 17px; color: #444; }
.info h3 { font-size: 15px; line-height: 17px; color: #212529; }
.info .open { margin-top: 2px; color: #138a00; font-size: 11px; font-weight: 600; line-height: 16px; }
.tags { display: flex; gap: 4px; margin-top: 4px; font-size: 10px; font-weight: 600; line-height: 13px; color: #333; }
.tags span { display: flex; align-items: center; gap: 3px; padding: 0 4px; border: 1px solid #e2e2e2; border-radius: 3px; background: #fafafa; }
.tags .icon { width: 10px; height: 10px; }
.more {
  flex: none;
  display: flex;
  align-items: center;
  justify-content: center;
  gap: 9px;
  height: 40px;
  border-radius: 3px;
  background: #00509b;
  color: #fff;
  font-size: 15px;
  font-weight: 600;
}
.more .icon { width: 12px; height: 12px; stroke-width: 3; }

.phone .results { flex: 1; min-height: 0; overflow: hidden; padding: 42px 17px 0; }
.phone .crumbs { gap: 10px; font-size: 16px; line-height: 20px; }
.phone h2 { margin: 24px 0 6px; font-size: 19px; line-height: 24px; }
.phone .badge { width: 33px; height: 33px; }
.phone .badge .icon { width: 14px; height: 14px; }
.phone .more { width: 42px; }

.body { flex: 1; display: grid; grid-template-columns: minmax(0, 624fr) minmax(0, 887fr); min-height: 0; }
.desktop .map { border-radius: 8px 8px 0 0; }
.panel { display: flex; flex-direction: column; min-height: 0; padding: 56px 34px 0 84px; }
.panel h1 { margin-bottom: 21px; font-size: 37px; line-height: 48px; }
.desktop .crumbs { gap: 12px; margin-top: 56px; font-size: 20px; line-height: 26px; }
.panel .results {
  flex: 1;
  min-height: 0;
  overflow: hidden;
  margin-top: 3px;
  mask-image: linear-gradient(rgba(0, 0, 0, .15), #000 28px, #000 calc(100% - 55px), rgba(0, 0, 0, .15));
}
.panel .stores:first-child { margin-top: -22px; }
.panel h2 { margin: 34px 0 7px; font-size: 21px; line-height: 26px; }
.desktop .badge { width: 50px; height: 50px; }
.desktop .badge .icon { width: 20px; height: 20px; }
.desktop .more { width: 107px; }
```
